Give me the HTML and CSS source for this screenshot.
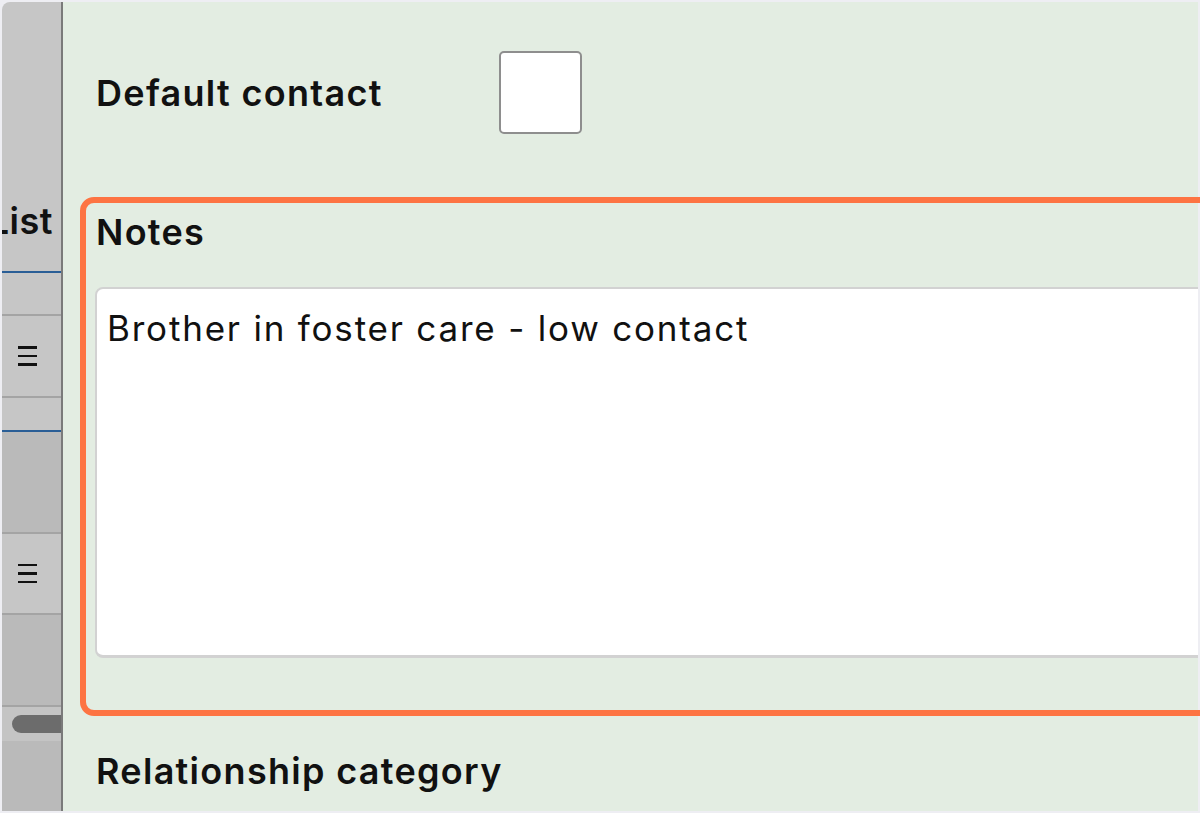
FILE: index.html
```html
<!DOCTYPE html>
<html lang="en">
<head>
<meta charset="utf-8">
<title>Contact details</title>
<link rel="stylesheet" href="styles.css">
</head>
<body>
<div class="frame">
  <aside class="rail">
    <div class="rail-head"><span class="rail-title">List</span></div>
    <div class="rail-spacer"></div>
    <div class="rail-row"><span class="menu-icon"><i></i><i></i><i></i></span></div>
    <div class="rail-spacer rail-spacer-blue"></div>
    <div class="rail-dark rail-dark-1"></div>
    <div class="rail-row rail-row-2"><span class="menu-icon"><i></i><i></i><i></i></span></div>
    <div class="rail-dark rail-dark-2"></div>
    <div class="rail-scroll"><span class="thumb"></span></div>
    <div class="rail-dark rail-fill"></div>
  </aside>
  <main class="panel">
    <div class="field-row">
      <span class="label label-wide">Default contact</span>
      <span class="checkbox"></span>
    </div>
    <section class="notes">
      <div class="label notes-label">Notes</div>
      <div class="textarea">Brother in foster care - low contact</div>
    </section>
    <div class="label category-label">Relationship category</div>
  </main>
</div>
<div class="highlight"></div>
</body>
</html>
```
FILE: styles.css
```css
html, body {
  margin: 0;
  padding: 0;
}
body {
  background: #eeeef3;
  width: 1200px;
  height: 813px;
  overflow: hidden;
  position: relative;
  font-family: Inter, "Noto Sans", sans-serif;
  color: #111;
}
.frame {
  margin: 2px 2px 0 2px;
  height: 809px;
  display: flex;
  border-top-left-radius: 8px;
  overflow: hidden;
}
.rail {
  width: 59px;
  flex: none;
  background: #c6c6c6;
  border-right: 2px solid #7a7a7a;
  display: flex;
  flex-direction: column;
}
.rail-head {
  height: 269px;
  border-bottom: 2px solid #2a5e96;
  display: flex;
  justify-content: flex-end;
  align-items: flex-start;
  overflow: hidden;
}
.rail-title {
  font-size: 36px;
  font-weight: 600;
  letter-spacing: 0.5px;
  margin-top: 198px;
  margin-right: 8px;
  white-space: nowrap;
  line-height: 1.2;
}
.rail-spacer {
  height: 41px;
  border-bottom: 2px solid #a4a4a4;
}
.rail-spacer-blue {
  height: 32px;
  border-bottom: 2px solid #2a5e96;
}
.rail-row {
  height: 80px;
  border-bottom: 2px solid #a4a4a4;
  display: flex;
  align-items: center;
  justify-content: center;
  padding-right: 8px;
}
.rail-row-2 {
  height: 79px;
}
.menu-icon {
  display: flex;
  flex-direction: column;
  gap: 6px;
  width: 19px;
}
.menu-icon i {
  display: block;
  height: 2.5px;
  background: #111;
}
.rail-dark {
  background: #bababa;
  border-bottom: 2px solid #a4a4a4;
}
.rail-dark-1 { height: 100px; }
.rail-dark-2 { height: 90px; }
.rail-scroll {
  height: 34px;
  background: #c4c4c4;
  display: flex;
  align-items: center;
  padding-left: 10px;
}
.thumb {
  flex: 1;
  height: 18px;
  background: #6c6c6c;
  border-radius: 9px 0 0 9px;
}
.rail-fill {
  flex: 1;
  border-bottom: none;
}
.panel {
  flex: 1;
  background: #e3ede2;
  padding-left: 33px;
  min-width: 0;
}
.label {
  font-size: 36px;
  font-weight: 600;
  letter-spacing: 1.3px;
  line-height: 1.2;
  white-space: nowrap;
}
.field-row {
  display: flex;
  align-items: center;
  padding-top: 49px;
}
.label-wide {
  width: 403px;
  flex: none;
  padding-top: 3px;
}
.checkbox {
  width: 79px;
  height: 79px;
  background: #fff;
  border: 2px solid #8e8e8e;
  border-radius: 5px;
}
.notes {
  padding-top: 77px;
}
.notes-label {
  margin-bottom: 33px;
}
.textarea {
  width: 1200px;
  height: 371px;
  background: #fff;
  border: 2px solid #d2d2d2;
  border-bottom-width: 3px;
  border-radius: 8px;
  padding: 18px 10px;
  font-size: 35px;
  letter-spacing: 1.8px;
  line-height: 1.2;
  box-sizing: border-box;
  margin-left: -1px;
}
.category-label {
  margin-top: 92px;
}
.highlight {
  position: absolute;
  left: 80px;
  top: 197px;
  width: 1200px;
  height: 519px;
  border: 6px solid #fd7443;
  border-radius: 14px;
  box-sizing: border-box;
  pointer-events: none;
}
```
